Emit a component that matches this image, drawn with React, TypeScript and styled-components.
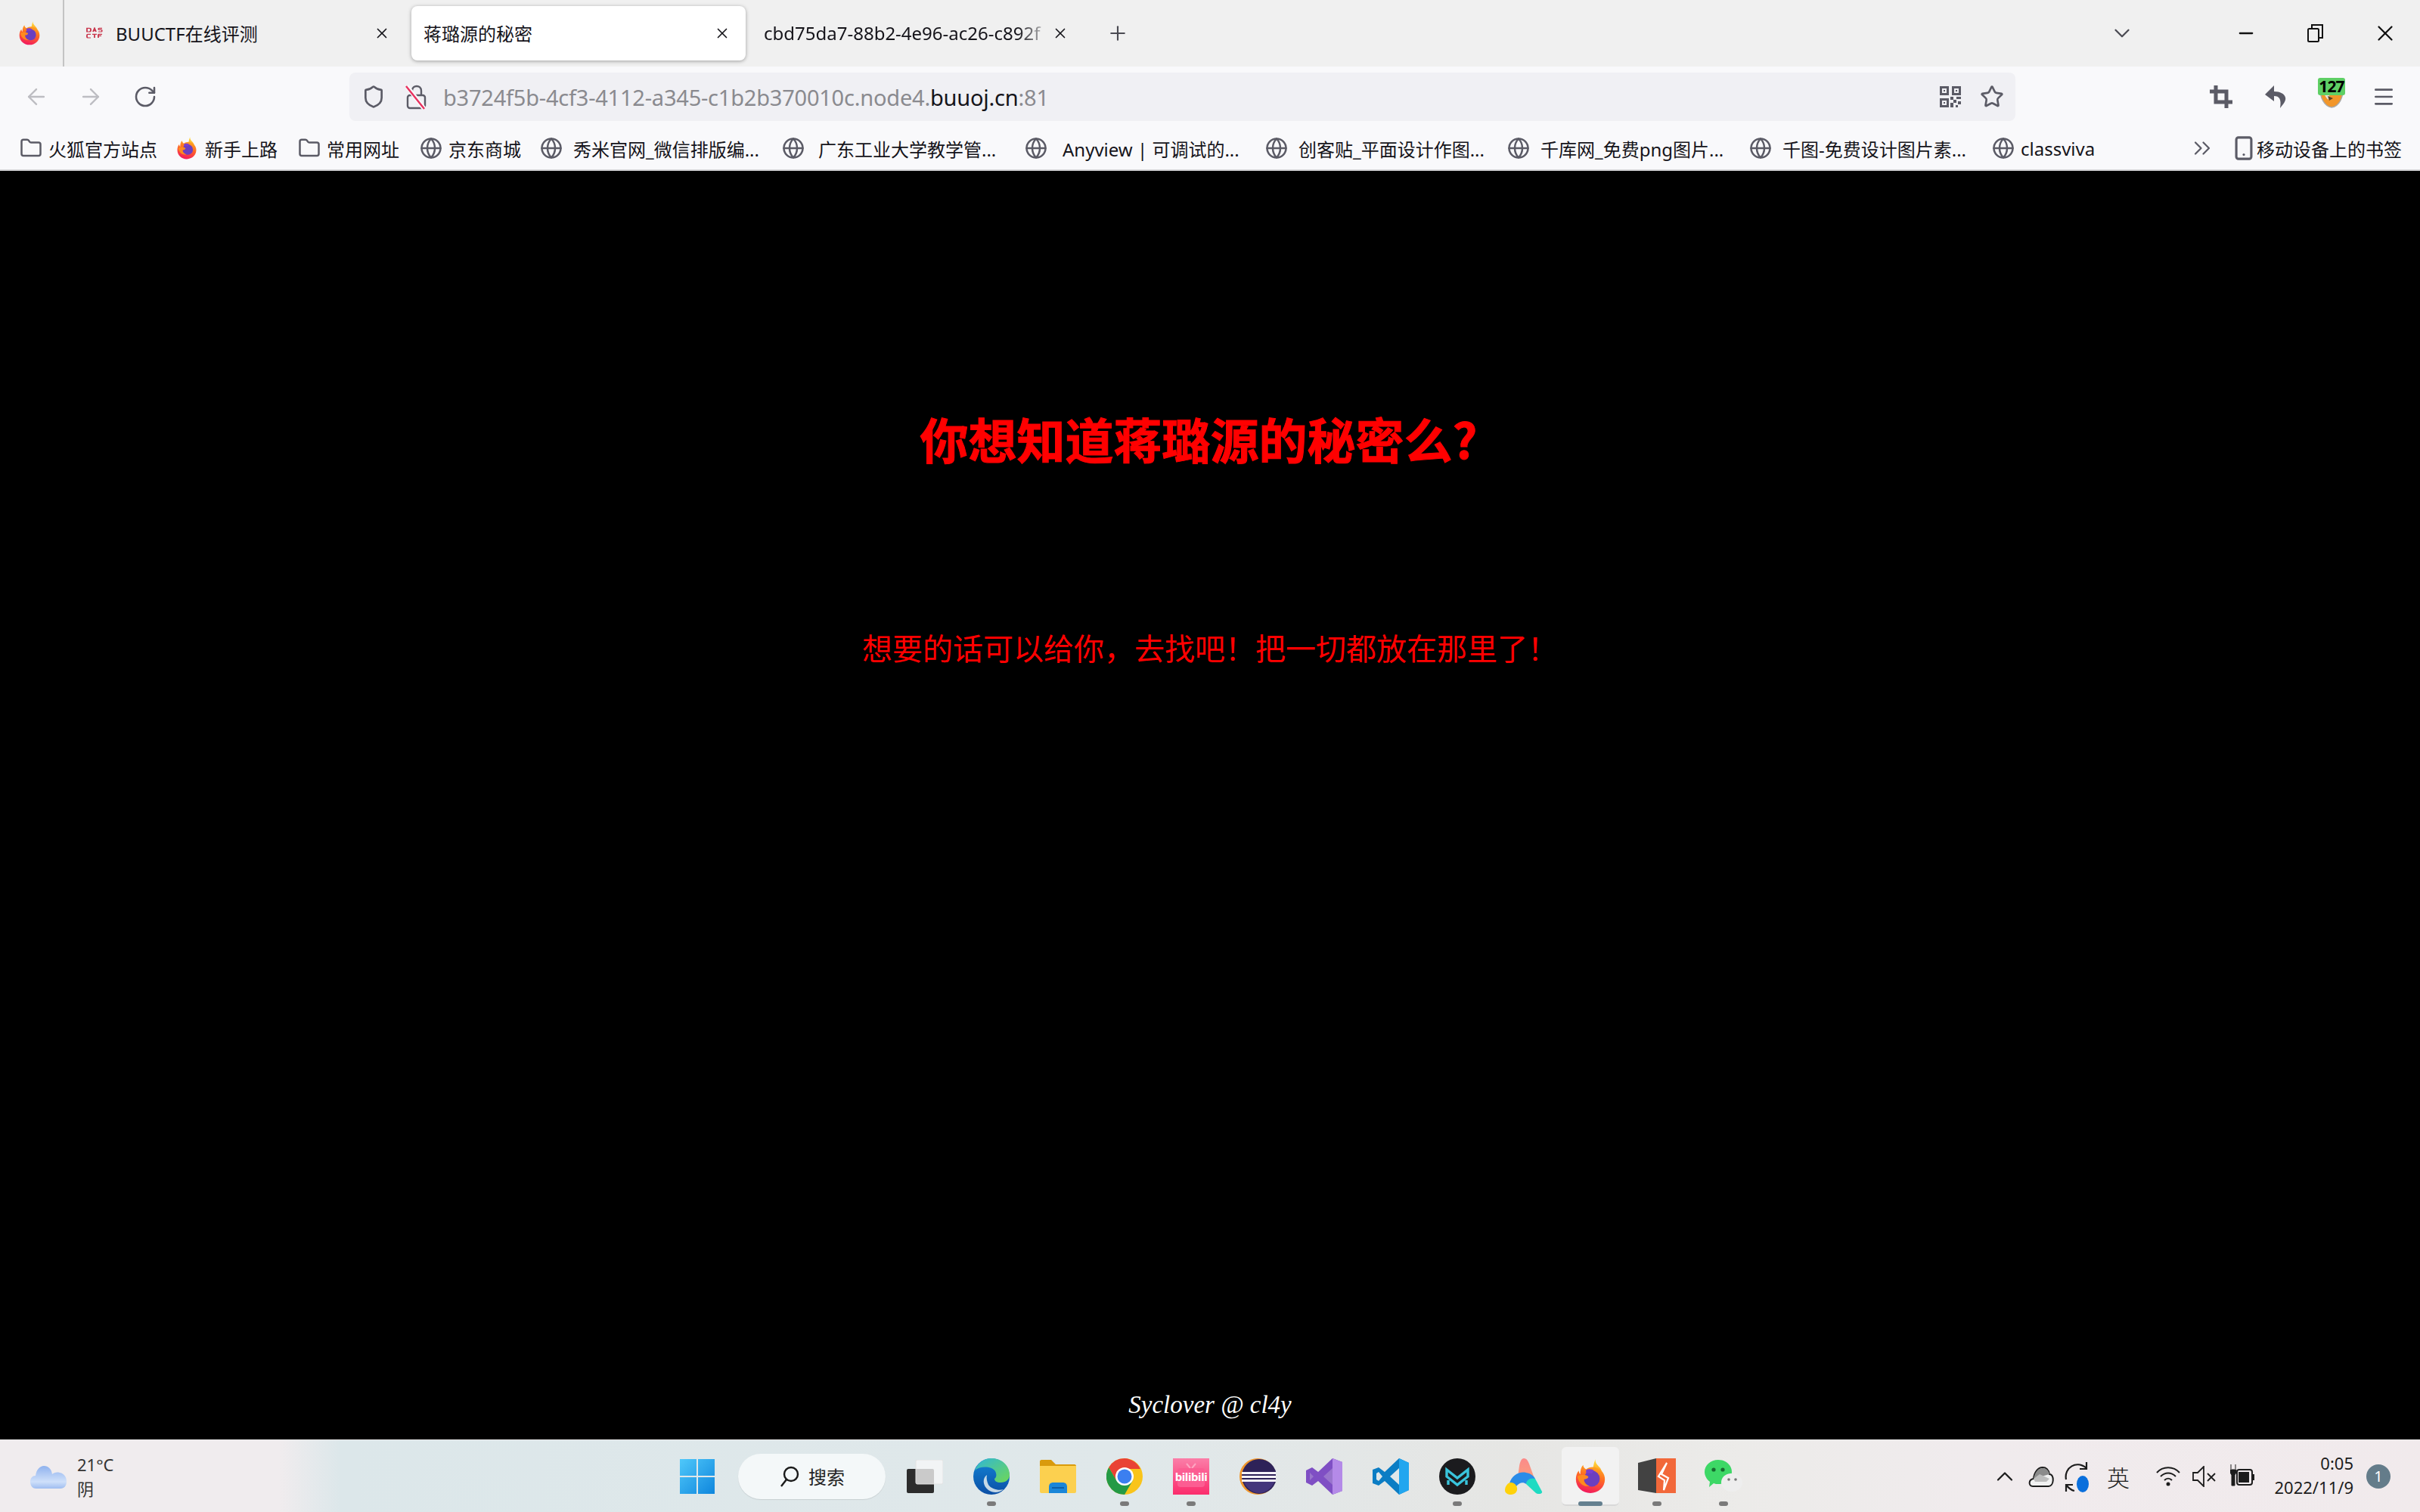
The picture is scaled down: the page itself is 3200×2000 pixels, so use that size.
import type { ReactNode } from 'react';
import styled, { createGlobalStyle } from 'styled-components';
import {
  ArrowLeft,
  ArrowRight,
  ChevronDown,
  ChevronUp,
  ChevronsRight,
  Folder,
  Globe,
  Menu,
  Minus,
  Plus,
  RotateCw,
  Shield,
  Smartphone,
  Star,
  X,
} from 'lucide-react';

const GlobalStyle = createGlobalStyle`
  html, body {
    margin: 0;
    padding: 0;
    background: #000;
  }
  body {
    font-family: "Noto Sans", "Noto Sans CJK SC", sans-serif;
  }
`;

const Page = styled.div`
  display: flex;
  flex-direction: column;
  width: 3200px;
  height: 2000px;
  overflow: hidden;
`;

const TabStrip = styled.div`
  display: flex;
  align-items: center;
  height: 88px;
  background: #f0f0f0;
  flex-shrink: 0;
`;

const AppMenu = styled.div`
  display: flex;
  align-items: center;
  justify-content: center;
  width: 85px;
  height: 88px;
  border-right: 2px solid #c4c4c4;
  padding-right: 6px;
  box-sizing: border-box;
`;

const Tab = styled.div<{ $active?: boolean; $w: number; $pl: number; $pr: number; $gap?: number }>`
  display: flex;
  align-items: center;
  gap: ${({ $gap }) => $gap ?? 16}px;
  width: ${({ $w }) => $w}px;
  height: 72px;
  box-sizing: border-box;
  padding: 0 ${({ $pr }) => $pr}px 0 ${({ $pl }) => $pl}px;
  border-radius: 8px;
  background: ${({ $active }) => ($active ? '#fff' : 'transparent')};
  box-shadow: ${({ $active }) => ($active ? '0 1px 5px rgba(0, 0, 0, 0.35)' : 'none')};
  color: #15141a;
  font-size: 24px;
  flex-shrink: 0;
`;

const TabTitle = styled.span<{ $fade?: boolean }>`
  flex: 1;
  white-space: nowrap;
  overflow: hidden;
  margin-top: -2px;
  ${({ $fade }) =>
    $fade &&
    'mask-image: linear-gradient(to right, #000 88%, transparent 100%);'}
`;

const TabClose = styled.span`
  display: flex;
  color: #15141a;
  flex-shrink: 0;
`;

const StripButton = styled.span<{ $w: number; $ml?: number; $dark?: boolean }>`
  display: flex;
  align-items: center;
  justify-content: center;
  width: ${({ $w }) => $w}px;
  margin-left: ${({ $ml }) => $ml || 0}px;
  color: ${({ $dark }) => ($dark ? '#111' : '#4a4a52')};
  flex-shrink: 0;
`;

const StripSpacer = styled.div`
  flex: 1;
`;

const NavBar = styled.div`
  display: flex;
  align-items: center;
  height: 72px;
  padding-top: 8px;
  box-sizing: border-box;
  background: #f9f9fb;
  flex-shrink: 0;
`;

const NavButton = styled.span<{ $w: number; $ml?: number; $muted?: boolean }>`
  display: flex;
  align-items: center;
  justify-content: center;
  position: relative;
  width: ${({ $w }) => $w}px;
  margin-left: ${({ $ml }) => $ml || 0}px;
  color: ${({ $muted }) => ($muted ? '#bdbdc2' : '#5b5b66')};
  flex-shrink: 0;
`;

const UrlBar = styled.div`
  display: flex;
  align-items: center;
  width: 2203px;
  height: 64px;
  margin-left: 234px;
  padding: 0 14px 0 16px;
  box-sizing: border-box;
  border-radius: 8px;
  background: #f0f0f4;
  flex-shrink: 0;
`;

const UrlIcon = styled.span<{ $w: number; $ml?: number }>`
  display: flex;
  align-items: center;
  justify-content: center;
  width: ${({ $w }) => $w}px;
  margin-left: ${({ $ml }) => $ml || 0}px;
  color: #5b5b66;
  flex-shrink: 0;
`;

const UrlText = styled.div`
  flex: 1;
  padding-left: 16px;
  font-size: 29px;
  letter-spacing: -0.22px;
  color: #8a8a8f;
  white-space: nowrap;
`;

const UrlHost = styled.span`
  color: #15141a;
`;

const NavTools = styled.div`
  display: flex;
  align-items: center;
  margin-left: 236px;
`;

const ExtBadge = styled.span`
  position: absolute;
  top: -10px;
  left: 20px;
  width: 36px;
  height: 23px;
  border-radius: 3px;
  background: #5fcf65;
  color: #000;
  font-size: 21px;
  font-weight: 700;
  line-height: 23px;
  text-align: center;
  letter-spacing: -0.8px;
`;

const BookmarkBar = styled.div`
  display: flex;
  align-items: center;
  height: 66px;
  padding: 8px 24px 0 26px;
  box-sizing: border-box;
  background: #f9f9fb;
  border-bottom: 2px solid #d4d4d6;
  flex-shrink: 0;
`;

const Bookmark = styled.div<{ $w: number; $gap: number }>`
  display: flex;
  align-items: center;
  gap: ${({ $gap }) => $gap}px;
  width: ${({ $w }) => $w}px;
  color: #15141a;
  font-size: 24px;
  white-space: nowrap;
  flex-shrink: 0;

  svg {
    color: #5b5b66;
    flex-shrink: 0;
  }
`;

const BookmarkOverflow = styled.span`
  display: flex;
  margin-left: auto;
  margin-right: 20px;
  color: #5b5b66;
`;

const MobileBookmarks = styled.div`
  display: flex;
  align-items: center;
  color: #15141a;
  font-size: 24px;
  white-space: nowrap;

  svg {
    color: #5b5b66;
  }
`;

const Main = styled.main`
  flex: 1;
  display: flex;
  flex-direction: column;
  align-items: center;
  padding: 313px 0 26px;
  box-sizing: border-box;
  background: #000;
  min-height: 0;
`;

const Heading = styled.h1`
  margin: 0 30px 0 0;
  color: #f00;
  font-family: "Noto Sans CJK SC", sans-serif;
  font-size: 64px;
  font-weight: 700;
  line-height: 80px;
  -webkit-text-stroke: 1px #f00;
`;

const Lead = styled.p`
  margin: 212px 0 0;
  color: #f00;
  font-family: "Noto Sans CJK SC", sans-serif;
  font-size: 40px;
  line-height: 50px;
`;

const Signature = styled.div`
  margin-top: auto;
  color: #fff;
  font-family: "Liberation Serif", serif;
  font-style: italic;
  font-size: 33px;
  line-height: 40px;
`;

const Taskbar = styled.footer`
  display: flex;
  align-items: center;
  height: 96px;
  background: linear-gradient(
    to right,
    #f0ecee 0,
    #f0ecee 370px,
    #dce7ea 450px,
    #e0e8ea 1500px,
    #e6e6e4 2000px,
    #ecebe9 2300px,
    #f0ebed 2600px,
    #f1eaec 100%
  );
  border-top: 1px solid #e4e4e4;
  box-sizing: border-box;
  flex-shrink: 0;
`;

const Weather = styled.div`
  display: flex;
  align-items: center;
  gap: 14px;
  width: 878px;
  padding-left: 40px;
  box-sizing: border-box;
  flex-shrink: 0;
`;

const WeatherText = styled.div`
  display: flex;
  flex-direction: column;
  gap: 2px;
  color: #333;
  font-size: 22px;
  line-height: 30px;
`;

const SearchPill = styled.div`
  display: flex;
  align-items: center;
  gap: 12px;
  width: 195px;
  height: 60px;
  margin: 0 8px 0 10px;
  padding-left: 55px;
  box-sizing: border-box;
  border-radius: 30px;
  background: #f4f8f9;
  box-shadow: 0 1px 1px rgba(0, 0, 0, 0.1);
  color: #222;
  font-size: 24px;
  flex-shrink: 0;
`;

const TaskIcon = styled.div<{ $active?: boolean }>`
  display: flex;
  align-items: center;
  justify-content: center;
  position: relative;
  width: 88px;
  height: 78px;
  flex-shrink: 0;

  ${({ $active }) =>
    $active &&
    `
    &::before {
      content: '';
      position: absolute;
      inset: 0 6px 0 6px;
      border-radius: 6px;
      background: #f2f2f2;
      border-bottom: 2px solid #d8d8d8;
    }
  `}

  svg {
    position: relative;
  }
`;

const RunDot = styled.span<{ $active?: boolean }>`
  position: absolute;
  left: 50%;
  bottom: 0;
  width: ${({ $active }) => ($active ? 32 : 12)}px;
  height: 6px;
  margin-left: ${({ $active }) => ($active ? -16 : -6)}px;
  border-radius: 3px;
  background: ${({ $active }) => ($active ? '#64808f' : '#7a7a7a')};
`;

const Tray = styled.div`
  display: flex;
  align-items: center;
  margin-left: auto;
  padding-right: 39px;
`;

const TrayIcon = styled.span<{ $w: number; $ml?: number }>`
  display: flex;
  align-items: center;
  justify-content: center;
  width: ${({ $w }) => $w}px;
  margin-left: ${({ $ml }) => $ml || 0}px;
  color: #1c1c1c;
  flex-shrink: 0;
`;

const ImeLabel = styled.span`
  font-size: 30px;
  color: #1c1c1c;
  font-family: "Noto Sans CJK SC", sans-serif;
  font-weight: 300;
`;

const Clock = styled.div`
  width: 123px;
  margin-top: -3px;
  color: #1c1c1c;
  font-size: 22px;
  line-height: 32px;
  text-align: right;
  white-space: nowrap;
`;

const NotifyBadge = styled.span`
  display: flex;
  align-items: center;
  justify-content: center;
  width: 32px;
  height: 32px;
  margin-left: 17px;
  border-radius: 50%;
  background: #647c8a;
  color: #fff;
  font-size: 20px;
`;

function FirefoxIcon({ size, id }: { size: number; id: string }) {
  return (
    <svg width={size} height={size} viewBox="0 0 48 48">
      <defs>
        <linearGradient id={`${id}a`} x1="0.7" y1="0" x2="0.4" y2="1">
          <stop offset="0" stopColor="#ffb11f" />
          <stop offset="0.45" stopColor="#ff6a24" />
          <stop offset="1" stopColor="#f2185f" />
        </linearGradient>
        <linearGradient id={`${id}b`} x1="0" y1="0" x2="0" y2="1">
          <stop offset="0" stopColor="#ffe340" />
          <stop offset="1" stopColor="#ff9a22" />
        </linearGradient>
      </defs>
      <path d="M31 0c-1 6 4 9 7 13 1 2 2 4 2 7l-12-2c-1-6 1-13 3-18z" fill={`url(#${id}b)`} />
      <path d="M14 8c0 3 2 5 4 6 4-3 10-4 15-2 7 3 11 9 11 16 0 11-9 19-20 19S4 39 4 28c0-4 1-9 4-12 0 2 1 4 2 5 0-5 1-10 4-13z" fill={`url(#${id}a)`} />
      <circle cx="26" cy="27" r="11" fill="#6b3fc0" />
      <path d="M18 15c4-2 9-1 11 1l-3 4c-4-1-6 0-8-1z" fill="#7a3fd0" />
      <path d="M6 24c4-3 11-3 15 0 1 2-3 4-6 4 0 4 3 8 8 9-8 2-15-3-17-13z" fill="#ff8a1f" />
    </svg>
  );
}

function DasIcon() {
  return (
    <svg width="24" height="16" viewBox="0 0 24 24" preserveAspectRatio="none" fill="none" stroke="#c8354b" strokeWidth="1.8">
      <path d="M2 2h3c2 0 2 1 2 2v2c0 2-1 3-2 3H2zM10 9l2-7 2 7M11 7h3M22 2h-4c-1 0-1 3 0 3h3c1 0 1 4 0 4h-4" />
      <path d="M7 14H3c-1 0-1 1-1 2v3c0 2 1 2 2 2h3M9 14h6M12 14v7M17 14h5M17 14v7M17 17h4" />
    </svg>
  );
}

function CustomGlobe() {
  return <Globe size={30} strokeWidth={2} />;
}

function InsecureLock() {
  return (
    <svg width="30" height="34" viewBox="0 0 30 34" fill="none">
      <rect x="4" y="15" width="23" height="17" rx="3" stroke="#5b5b66" strokeWidth="2.4" />
      <path d="M10 15V9c0-8 12-8 12 0v6" stroke="#5b5b66" strokeWidth="2.4" />
      <path d="M3 3l23 30" stroke="#f9f9fb" strokeWidth="6" />
      <path d="M2 3l24 30" stroke="#e8325f" strokeWidth="2.4" />
    </svg>
  );
}

function QrIcon() {
  return (
    <svg width="28" height="28" viewBox="0 0 28 28" fill="#5b5b66">
      <path fillRule="evenodd" d="M0 0h12v12H0zM3 3v6h6V3zM16 0h12v12H16zM19 3v6h6V3zM0 16h12v12H0zM3 19v6h6v-6z" />
      <path d="M5 5h2v2H5zM21 5h2v2h-2zM5 21h2v2H5zM14 14h4v4h-4zM22 14h6v3h-6zM18 18h4v4h-4zM14 22h4v6h-4zM24 20h4v4h-4zM21 25h3v3h-3z" />
    </svg>
  );
}

function CropIcon() {
  return (
    <svg width="30" height="30" viewBox="0 0 30 30" fill="none" stroke="#5b5b66" strokeWidth="5">
      <path d="M8 0v22h22M22 30V8H0" />
    </svg>
  );
}

function UndoIcon() {
  return (
    <svg width="28" height="30" viewBox="0 0 28 30" fill="#5b5b66">
      <path d="M12 0L0 12l12 9v-7c7 0 10 4 8 16 5-6 8-10 7-14-1-5-7-8-15-8z" />
    </svg>
  );
}

function FoxExtIcon() {
  return (
    <svg width="32" height="30" viewBox="0 0 32 30">
      <path d="M1 2h30c1 14-5 26-15 27C7 28 0 16 1 2z" fill="#f2962a" stroke="#a9a9a9" strokeWidth="1.4" />
      <path d="M5 6c3 3 6 6 8 7l-1 6c-3-2-6-7-7-13z" fill="#e8e3d8" />
      <path d="M11 14l7 3-5 3zM20 8l5-2-3 6z" fill="#5b4326" />
    </svg>
  );
}

function RestoreIcon() {
  return (
    <svg width="22" height="24" viewBox="0 0 22 24" fill="none" stroke="#111" strokeWidth="2">
      <rect x="1" y="6" width="14" height="17" rx="1.5" />
      <path d="M6 6V1h14v17h-5" />
    </svg>
  );
}

function CloudIcon() {
  return (
    <svg width="48" height="32" viewBox="0 0 48 32">
      <defs>
        <linearGradient id="wx" x1="0" y1="0" x2="0" y2="1">
          <stop offset="0" stopColor="#8fb2ee" />
          <stop offset="0.7" stopColor="#cfe0fa" />
          <stop offset="1" stopColor="#9fbdf0" />
        </linearGradient>
      </defs>
      <path d="M8 32C2 32 0 27 0 23c0-5 3-8 7-8 1-8 6-13 11-13 6 0 10 4 11 11 2-2 6-3 10-2 6 1 9 6 9 12 0 5-3 9-8 9z" fill="url(#wx)" />
    </svg>
  );
}

function WindowsLogo() {
  return (
    <svg width="46" height="46" viewBox="0 0 46 46">
      <defs>
        <linearGradient id="wa" x1="0" y1="0" x2="1" y2="1">
          <stop offset="0" stopColor="#4fc8fa" />
          <stop offset="1" stopColor="#0f86dd" />
        </linearGradient>
      </defs>
      <path d="M0 0h22v22H0zM24 0h22v22H24zM0 24h22v22H0zM24 24h22v22H24z" fill="url(#wa)" />
    </svg>
  );
}

function SearchGlyph() {
  return (
    <svg width="26" height="28" viewBox="0 0 26 28" fill="none" stroke="#1a1a1a" strokeWidth="2.4">
      <circle cx="15" cy="11" r="9" />
      <path d="M9 18L2 27" />
    </svg>
  );
}

function TaskViewIcon() {
  return (
    <svg width="48" height="44" viewBox="0 0 48 44">
      <rect x="0" y="12" width="36" height="32" rx="2" fill="#2c2c2c" />
      <rect x="12" y="0" width="36" height="32" rx="2" fill="#f7f7f7" fillOpacity="0.78" stroke="#e2e2e2" />
    </svg>
  );
}

function EdgeIcon() {
  return (
    <svg width="48" height="48" viewBox="0 0 48 48">
      <defs>
        <linearGradient id="e1" x1="0" y1="0" x2="1" y2="1">
          <stop offset="0" stopColor="#2fb6d8" />
          <stop offset="1" stopColor="#6fd855" />
        </linearGradient>
        <linearGradient id="e2" x1="0" y1="0" x2="0" y2="1">
          <stop offset="0" stopColor="#1384d6" />
          <stop offset="1" stopColor="#0b4fa5" />
        </linearGradient>
      </defs>
      <circle cx="24" cy="24" r="24" fill="url(#e2)" />
      <path d="M2 16C6 6 14 0 24 0c14 0 24 10 24 22 0 6-5 10-12 10-5 0-8-2-8-5 3-2 3-6 1-10-5-7-20-7-27-1z" fill="url(#e1)" />
      <path d="M18 22c-6 4-6 14 2 20 6 4 14 4 20-1-6 2-16 0-20-6-2-4-3-9-2-13z" fill="#e6eef0" fillOpacity="0.85" />
    </svg>
  );
}

function FolderApp() {
  return (
    <svg width="48" height="44" viewBox="0 0 48 44">
      <path d="M0 2c0-1 1-2 2-2h13l6 6h25c1 0 2 1 2 2v4H0z" fill="#d99a0c" />
      <path d="M0 8h48v34c0 1-1 2-2 2H2c-1 0-2-1-2-2z" fill="#fcd04f" />
      <path d="M12 44v-8c0-4 2-6 6-6h12c4 0 6 2 6 6v8z" fill="#1a86d8" />
      <rect x="16" y="36" width="16" height="2" fill="#0c5fa8" />
    </svg>
  );
}

function ChromeIcon() {
  return (
    <svg width="48" height="48" viewBox="0 0 48 48">
      <circle cx="24" cy="24" r="24" fill="#f9c41a" />
      <path d="M24 0A24 24 0 0 0 3.2 12L13 29 24 14h20.8A24 24 0 0 0 24 0z" fill="#e94235" />
      <path d="M3.2 12A24 24 0 0 0 24 48l11-19H13z" fill="#249a45" />
      <circle cx="24" cy="24" r="12" fill="#fff" />
      <circle cx="24" cy="24" r="9.5" fill="#3b7ff0" />
    </svg>
  );
}

function BiliIcon() {
  return (
    <svg width="48" height="48" viewBox="0 0 48 48">
      <defs>
        <linearGradient id="bl" x1="0" y1="0" x2="0" y2="1">
          <stop offset="0" stopColor="#fb7ea8" />
          <stop offset="1" stopColor="#fb2c6c" />
        </linearGradient>
      </defs>
      <rect width="48" height="48" fill="url(#bl)" />
      <path d="M18 7l5 6M30 7l-5 6" stroke="#fda6c2" strokeWidth="2" />
      <rect x="6" y="13" width="36" height="25" rx="4" fill="#fc5d92" />
      <text x="24" y="30" fontSize="15" fontWeight="700" fill="#fff" textAnchor="middle" fontFamily="Noto Sans, sans-serif" letterSpacing="-0.4">
        bilibili
      </text>
    </svg>
  );
}

function EclipseIcon() {
  return (
    <svg width="48" height="48" viewBox="0 0 48 48">
      <circle cx="24" cy="24" r="24" fill="#f0962c" />
      <circle cx="26" cy="24" r="23" fill="#2e2258" />
      <path d="M5 28h42c-2 10-11 18-21 18S7 38 5 28z" fill="#44357c" />
      <path d="M3 18h46v3H3zM3 23h46v3H3zM3 28h46v3H3z" fill="#f4f2f8" />
    </svg>
  );
}

function VsIcon() {
  return (
    <svg width="48" height="48" viewBox="0 0 48 48">
      <path d="M35 0l13 5v38l-13 5L16 30l-8 6-8-4V16l8-4 8 6z" fill="#7f4fc4" />
      <path d="M35 0l13 5v38l-13 5z" fill="#b48ae8" />
      <path d="M35 13v22l-12-11zM5 19v10l5-5z" fill="#e8e8e8" fillOpacity="0.25" />
    </svg>
  );
}

function VsCodeIcon() {
  return (
    <svg width="48" height="48" viewBox="0 0 48 48">
      <path d="M35 0l13 6v36l-13 6L16 30l-8 6-8-3V15l8-3 8 6z" fill="#0b7dc4" />
      <path d="M35 0l13 6v36l-13 6z" fill="#22a6ef" />
      <path d="M35 13L23 24l12 11z" fill="#dfe7ea" />
      <path d="M8 18l5 6-5 6-3-2v-8z" fill="#dfe7ea" />
    </svg>
  );
}

function MailIcon() {
  return (
    <svg width="48" height="48" viewBox="0 0 48 48">
      <circle cx="24" cy="24" r="24" fill="#1b1b1e" />
      <path d="M10 15l14 11 14-11v9L24 35 10 24z" fill="none" stroke="#39c4dc" strokeWidth="3.4" />
      <path d="M12 35v-6M36 35v-6" stroke="#39c4dc" strokeWidth="3.4" />
    </svg>
  );
}

function ArcIcon() {
  return (
    <svg width="50" height="48" viewBox="0 0 50 48">
      <defs>
        <linearGradient id="ar" x1="0" y1="0" x2="0" y2="1">
          <stop offset="0" stopColor="#fb8a8a" />
          <stop offset="1" stopColor="#f9a27a" />
        </linearGradient>
      </defs>
      <path d="M25 0c4 0 6 4 8 10l8 22H16L19 10c1-6 3-10 6-10z" fill="url(#ar)" />
      <path d="M6 33c3-10 12-16 22-14 6 1 10 4 12 8L28 34c-4-3-9-2-13 3z" fill="#2a8ce8" />
      <path d="M28 34c0-5 6-9 12-7l9 17c1 3-5 4-8 2z" fill="#1edbc2" />
      <path d="M0 42c0-5 4-10 8-10 4 0 7 3 8 7 1 5-3 9-8 9-4 0-8-2-8-6z" fill="#ffd20a" />
    </svg>
  );
}

function WinRarIcon() {
  return (
    <svg width="50" height="48" viewBox="0 0 50 48">
      <path d="M0 6l24-6v46L0 42z" fill="#424242" />
      <path d="M24 0h26v46H24z" fill="#f2683a" />
      <path d="M38 6l-7 15 9 5-6 16 1-13-8-5z" fill="none" stroke="#fff" strokeWidth="2.2" />
    </svg>
  );
}

function WeChatIcon() {
  return (
    <svg width="50" height="48" viewBox="0 0 50 48">
      <path d="M18 2c10 0 18 7 18 16s-8 16-18 16c-2 0-4 0-6-1l-6 5 1-7C3 28 0 23 0 18 0 9 8 2 18 2z" fill="#3dd866" />
      <circle cx="12" cy="15" r="2.6" fill="#176b30" />
      <circle cx="24" cy="15" r="2.6" fill="#176b30" />
      <path d="M36 20c8 0 14 5 14 12s-6 12-14 12c-8 0-14-5-14-12s6-12 14-12z" fill="#eeeeee" />
      <circle cx="32" cy="28" r="1.8" fill="#777" />
      <circle cx="41" cy="28" r="1.8" fill="#777" />
    </svg>
  );
}

function OneDriveIcon() {
  return (
    <svg width="34" height="30" viewBox="0 0 34 30">
      <path d="M6 28c-6 0-6-9 1-10 1-9 6-15 12-15 5 0 8 4 9 9 7 0 6 16-1 16z" fill="#f2f2f2" stroke="#1c1c1c" strokeWidth="2" />
      <path d="M7 18c2-9 6-14 12-14 5 0 8 3 9 8z" fill="#8b8b8b" />
      <path d="M7 18l8-6 13 6-4 4H9z" fill="#bdbdbd" />
    </svg>
  );
}

function SyncIcon() {
  return (
    <svg width="34" height="44" viewBox="0 0 34 44" fill="none">
      <path d="M2 26C-1 10 16 0 29 11" stroke="#1c1c1c" strokeWidth="2.2" />
      <path d="M29 3v9h-9" stroke="#1c1c1c" strokeWidth="2.2" />
      <path d="M2 42v-9h9M2 33c3 4 6 7 11 8" stroke="#1c1c1c" strokeWidth="2.2" />
      <ellipse cx="24" cy="32" rx="8" ry="11" fill="#0a6fdc" />
    </svg>
  );
}

function WifiIcon() {
  return (
    <svg width="32" height="28" viewBox="0 0 32 28" fill="none" stroke="#1c1c1c" strokeWidth="2">
      <path d="M1 9c8-9 22-9 30 0M6 14c6-6 14-6 20 0M11 19c3-3 7-3 10 0" />
      <circle cx="16" cy="24" r="2.5" fill="#1c1c1c" stroke="none" />
    </svg>
  );
}

function SpeakerMuteIcon() {
  return (
    <svg width="32" height="28" viewBox="0 0 32 28" fill="none" stroke="#1c1c1c" strokeWidth="1.8">
      <path d="M1 9h6l8-8v26l-8-8H1zM20 10l10 10M30 10L20 20" />
    </svg>
  );
}

function BatteryIcon() {
  return (
    <svg width="32" height="32" viewBox="0 0 32 32">
      <rect x="9" y="7" width="20" height="20" rx="3" fill="#f0ebed" stroke="#1c1c1c" strokeWidth="2" />
      <rect x="11" y="10" width="14" height="14" fill="#1c1c1c" />
      <rect x="29" y="13" width="3" height="8" fill="#1c1c1c" />
      <path d="M1 0v6M7 0v6M0 7h8v4l-2 3v14h-4V14L0 11z" fill="#1c1c1c" stroke="#1c1c1c" strokeWidth="1" />
    </svg>
  );
}

const TOP_BOOKMARKS: { label: string; icon: ReactNode; w: number; gap: number }[] = [
  { label: '火狐官方站点', icon: <Folder size={30} strokeWidth={2} />, w: 206, gap: 8 },
  { label: '新手上路', icon: <FirefoxIcon size={30} id="fb" />, w: 162, gap: 9 },
  { label: '常用网址', icon: <Folder size={30} strokeWidth={2} />, w: 161, gap: 8 },
  { label: '京东商城', icon: <CustomGlobe />, w: 159, gap: 8 },
  { label: '秀米官网_微信排版编...', icon: <CustomGlobe />, w: 320, gap: 14 },
  { label: '广东工业大学教学管...', icon: <CustomGlobe />, w: 321, gap: 18 },
  { label: 'Anyview | 可调试的...', icon: <CustomGlobe />, w: 318, gap: 20 },
  { label: '创客贴_平面设计作图...', icon: <CustomGlobe />, w: 320, gap: 14 },
  { label: '千库网_免费png图片...', icon: <CustomGlobe />, w: 320, gap: 14 },
  { label: '千图-免费设计图片素...', icon: <CustomGlobe />, w: 321, gap: 14 },
  { label: 'classviva', icon: <CustomGlobe />, w: 140, gap: 8 },
];

const TASK_APPS: { key: string; icon: ReactNode; dot?: boolean; active?: boolean }[] = [
  { key: 'edge', icon: <EdgeIcon />, dot: true },
  { key: 'folder', icon: <FolderApp /> },
  { key: 'chrome', icon: <ChromeIcon />, dot: true },
  { key: 'bili', icon: <BiliIcon />, dot: true },
  { key: 'eclipse', icon: <EclipseIcon /> },
  { key: 'vs', icon: <VsIcon /> },
  { key: 'vscode', icon: <VsCodeIcon /> },
  { key: 'mail', icon: <MailIcon />, dot: true },
  { key: 'arc', icon: <ArcIcon /> },
  { key: 'firefox', icon: <FirefoxIcon size={46} id="ft" />, active: true },
  { key: 'rar', icon: <WinRarIcon />, dot: true },
  { key: 'wechat', icon: <WeChatIcon />, dot: true },
];

export default function App() {
  return (
    <Page lang="zh-CN">
      <GlobalStyle />
      <TabStrip>
        <AppMenu>
          <FirefoxIcon size={32} id="fm" />
        </AppMenu>
        <Tab $w={459} $pl={28} $pr={28}>
          <DasIcon />
          <TabTitle>BUUCTF在线评测</TabTitle>
          <TabClose>
            <X size={22} strokeWidth={1.8} />
          </TabClose>
        </Tab>
        <Tab $active $w={442} $pl={16} $pr={20}>
          <TabTitle>蒋璐源的秘密</TabTitle>
          <TabClose>
            <X size={22} strokeWidth={1.8} />
          </TabClose>
        </Tab>
        <Tab $w={448} $pl={24} $pr={21} $gap={0}>
          <TabTitle $fade>cbd75da7-88b2-4e96-ac26-c892f</TabTitle>
          <TabClose>
            <X size={22} strokeWidth={1.8} />
          </TabClose>
        </Tab>
        <StripButton $w={44} $ml={22}>
          <Plus size={30} strokeWidth={1.7} />
        </StripButton>
        <StripSpacer />
        <StripButton $w={60}>
          <ChevronDown size={34} strokeWidth={1.6} />
        </StripButton>
        <StripButton $w={92} $ml={88} $dark>
          <Minus size={28} strokeWidth={2} />
        </StripButton>
        <StripButton $w={92} $dark>
          <RestoreIcon />
        </StripButton>
        <StripButton $w={92} $dark>
          <X size={34} strokeWidth={1.6} />
        </StripButton>
      </TabStrip>

      <NavBar>
        <NavButton $w={72} $ml={12} $muted>
          <ArrowLeft size={34} strokeWidth={1.7} />
        </NavButton>
        <NavButton $w={72} $muted>
          <ArrowRight size={34} strokeWidth={1.7} />
        </NavButton>
        <NavButton $w={72}>
          <RotateCw size={32} strokeWidth={1.9} />
        </NavButton>
        <UrlBar>
          <UrlIcon $w={32}>
            <Shield size={32} strokeWidth={2} />
          </UrlIcon>
          <UrlIcon $w={40} $ml={20}>
            <InsecureLock />
          </UrlIcon>
          <UrlText>
            b3724f5b-4cf3-4112-a345-c1b2b370010c.node4.<UrlHost>buuoj.cn</UrlHost>:81
          </UrlText>
          <UrlIcon $w={28}>
            <QrIcon />
          </UrlIcon>
          <UrlIcon $w={34} $ml={24}>
            <Star size={32} strokeWidth={2} />
          </UrlIcon>
        </UrlBar>
        <NavTools>
          <NavButton $w={72}>
            <CropIcon />
          </NavButton>
          <NavButton $w={72}>
            <UndoIcon />
          </NavButton>
          <NavButton $w={76}>
            <FoxExtIcon />
            <ExtBadge>127</ExtBadge>
          </NavButton>
          <NavButton $w={62}>
            <Menu size={32} strokeWidth={2} />
          </NavButton>
        </NavTools>
      </NavBar>

      <BookmarkBar>
        {TOP_BOOKMARKS.map((b) => (
          <Bookmark key={b.label} $w={b.w} $gap={b.gap}>
            {b.icon}
            <span>{b.label}</span>
          </Bookmark>
        ))}
        <BookmarkOverflow>
          <ChevronsRight size={36} strokeWidth={1.5} />
        </BookmarkOverflow>
        <MobileBookmarks>
          <Smartphone size={34} strokeWidth={2.2} />
          移动设备上的书签
        </MobileBookmarks>
      </BookmarkBar>

      <Main>
        <Heading>你想知道蒋璐源的秘密么?</Heading>
        <Lead>{'想要的话可以给你\uFF0C去找吧\uFF01把一切都放在那里了\uFF01'}</Lead>
        <Signature>Syclover @ cl4y</Signature>
      </Main>

      <Taskbar>
        <Weather>
          <CloudIcon />
          <WeatherText>
            <span>21°C</span>
            <span>阴</span>
          </WeatherText>
        </Weather>
        <TaskIcon>
          <WindowsLogo />
        </TaskIcon>
        <SearchPill>
          <SearchGlyph />
          搜索
        </SearchPill>
        <TaskIcon>
          <TaskViewIcon />
        </TaskIcon>
        {TASK_APPS.map((a) => (
          <TaskIcon key={a.key} $active={a.active}>
            {a.icon}
            {(a.dot || a.active) && <RunDot $active={a.active} />}
          </TaskIcon>
        ))}
        <Tray>
          <TrayIcon $w={48}>
            <ChevronUp size={36} strokeWidth={1.5} />
          </TrayIcon>
          <TrayIcon $w={48}>
            <OneDriveIcon />
          </TrayIcon>
          <TrayIcon $w={48}>
            <SyncIcon />
          </TrayIcon>
          <TrayIcon $w={60}>
            <ImeLabel>英</ImeLabel>
          </TrayIcon>
          <TrayIcon $w={48} $ml={12}>
            <WifiIcon />
          </TrayIcon>
          <TrayIcon $w={48}>
            <SpeakerMuteIcon />
          </TrayIcon>
          <TrayIcon $w={48} $ml={2}>
            <BatteryIcon />
          </TrayIcon>
          <Clock>
            <div>0:05</div>
            <div>2022/11/9</div>
          </Clock>
          <NotifyBadge>1</NotifyBadge>
        </Tray>
      </Taskbar>
    </Page>
  );
}
